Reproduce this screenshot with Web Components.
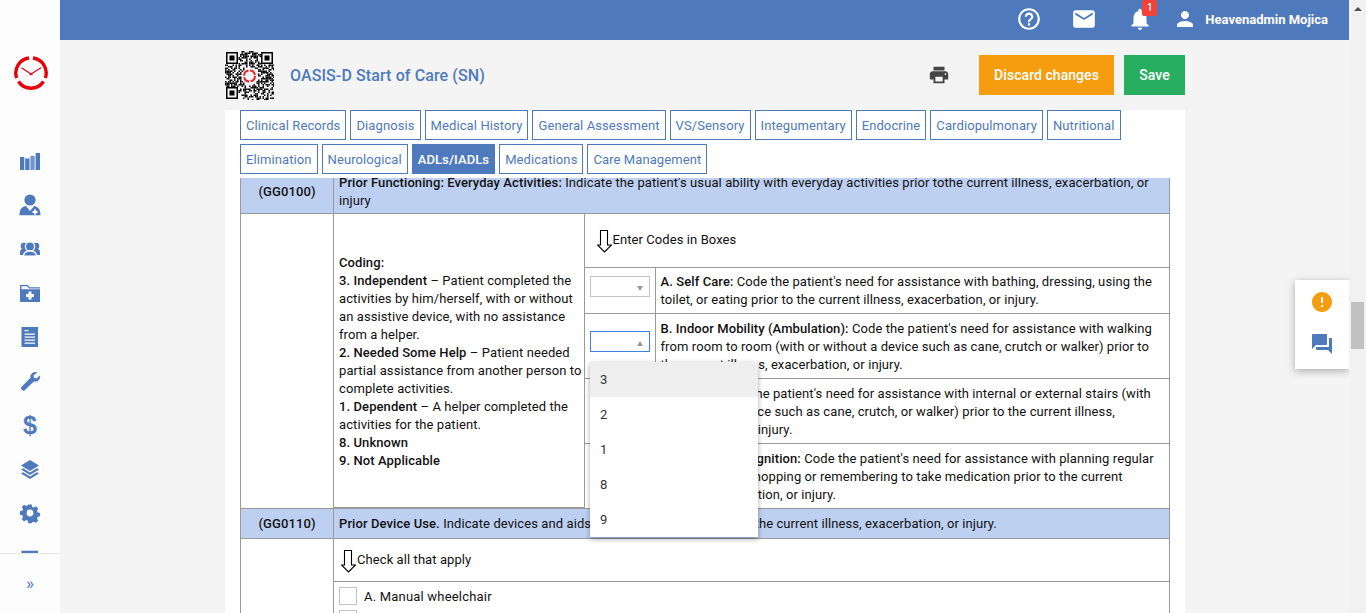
<!DOCTYPE html>
<html><head><meta charset="utf-8">
<style>
html,body{margin:0;height:100%;overflow:hidden}
body{display:flex;font-family:Roboto,"Liberation Sans",sans-serif;font-size:13px;background:#f4f4f4;color:#111}
</style></head><body>
<x-sidebar></x-sidebar>
<x-main>
  <x-topbar></x-topbar>
  <x-workspace>
    <x-titlebar></x-titlebar>
    <x-sheet>
      <x-tabs></x-tabs>
      <x-form></x-form>
    </x-sheet>
  </x-workspace>
  <x-float></x-float>
</x-main>
<x-scroll></x-scroll>
<script>
function def(name, css, html, after){
  customElements.define(name, class extends HTMLElement{
    connectedCallback(){
      if(this.shadowRoot) return;
      const r=this.attachShadow({mode:'open'});
      r.innerHTML='<style>'+css+'</style>'+html;
      if(after) after(r,this);
    }
  });
}
const B='#4e7abd';
const W='#fdfdfd';
const svgI=(inner,vb)=>`<svg viewBox="${vb||'0 0 22 22'}" width="22" height="22">${inner}</svg>`;
const sideIcons=[
 svgI(`<path d="M1 7h4.300v13H1zM6.200 8.500h4.300V20H6.200z"/><path d="M11.400 6h4.300v14h-4.300z" opacity=".8"/><path d="M16.600 3h4.400v17h-4.400z"/>`),
 svgI(`<circle cx="11" cy="6" r="5.600"/><path d="M7 12l4 5 4-5c3.500.6 6.500 2.500 6.500 9.300H.5C.5 14.500 3.500 12.600 7 12z"/><path fill="${W}" d="M15 15.500h2v1.500h1.500v2H17v1.500h-2V19h-1.500v-2H15z"/>`),
 svgI(`<circle cx="5" cy="8" r="3.300"/><circle cx="17" cy="8" r="3.300"/><path d="M1 17v-3c0-2.500 2-3.500 4-3.500h12c2 0 4 1 4 3.500v3z"/><circle cx="11" cy="8.500" r="4.600" stroke="${W}" stroke-width="1.300"/><path stroke="${W}" stroke-width="1.300" d="M4.500 18.500c0-4 3-5.500 6.500-5.500s6.500 1.500 6.500 5.500z"/><path fill="${W}" d="M0 17.600h22V22H0z"/>`),
 svgI(`<path fill-rule="evenodd" d="M1 3h7.500l2.200 2.200H21v1.300H10.200L8 4.300H2.300v3H21V20H1zM9.500 9.500V12H7v3h2.500v2.500h3V15H15v-3h-2.500V9.500z"/>`),
 svgI(`<path fill-rule="evenodd" d="M2.500 1h16.500v20H2.500zM5.500 4v1.200h4V4zM5.500 7.500v1.200h10.500V7.500zM5.500 10.500v1.200h10.500v-1.200zM5.500 13.500v1.200h10.500v-1.200zM5.500 16.500v1.200h10.500v-1.200z"/>`),
 svgI(`<path d="M21 5.500c.8 3.300-2 6.900-6.200 6.100L5.700 20.300c-1.500 1.500-4.800-1.300-3.300-3.200l9.100-9.300C10.700 4 14.500 1.100 18.300 2.200l-3.800 3.300.5 2.300 2.400.6z"/>`),
 '<div class="d">$</div>',
 svgI(`<path d="M11 2l9 5.600L11 13 2 7.600z"/><path d="M4.200 10.200L11 14.400l6.800-4.200 2.200 1.300-9 5.500-9-5.500z"/><path d="M4.200 14.200L11 18.400l6.800-4.200 2.200 1.300L11 21l-9-5.500z"/>`),
 svgI(`<path fill-rule="evenodd" d="M9 0h4l.6 2.800 2 .8 2.400-1.500 2.800 2.800-1.500 2.400.8 2 2.800.6v4l-2.800.6-.8 2 1.500 2.400-2.800 2.800-2.400-1.500-2 .8L13 22H9l-.6-2.800-2-.8L4 19.900l-2.800-2.800 1.500-2.400-.8-2L-.9 12V8l2.800-.6.8-2L1.200 3 4 .2l2.400 1.500 2-.8zM11 6a4 4 0 1 0 0 8 4 4 0 0 0 0-8z" transform="translate(0 1)"/>`,'-2 -2 26 26'),
 svgI(`<path d="M2.500 4.700H19V22H2.500z"/>`)
];
def('x-sidebar',`
:host{display:flex;flex-direction:column;width:60px;flex:none;height:100vh;background:${W};position:relative;z-index:2}
.logo{height:147px;flex:none;box-sizing:border-box;padding:55px 0 0 13px}
.nav{flex:1;min-height:0;overflow:hidden;display:flex;flex-direction:column;align-items:center;gap:22px;padding-top:3px}
.nav>*{flex:none;width:22px;height:22px}
svg{display:block;fill:${B}}
.d{font:bold 25px/22px "Liberation Sans",sans-serif;color:${B};text-align:center}
.foot{height:60px;flex:none;border-top:1px solid #e6e6e6;box-sizing:border-box;display:flex;align-items:center;justify-content:center;color:${B};font-size:17px;line-height:1}
`,`<div class="logo"><svg width="36" height="36" viewBox="0 0 36 36"><g fill="none" stroke="#e8000b" stroke-width="3.400"><path d="M16 3A15 15 0 0 0 3.700 23"/><path d="M20 3A15 15 0 0 1 32.300 23"/><path d="M5.500 26.500A15 15 0 0 0 30.500 26.500"/></g><path d="M8.500 12.700l11 7.300M28 12.700L16.500 20" stroke="#e8000b" stroke-width="1.200" fill="none"/></svg></div>
<div class="nav">${sideIcons.join('')}</div>
<div class="foot">»</div>`);
def('x-main',`:host{display:flex;flex-direction:column;flex:1;min-width:0;height:100vh;position:relative}`,`<slot></slot>`);
def('x-scroll',`:host{display:block;width:17px;flex:none;height:100vh;background:#f1f1f1;position:relative}
.up{width:0;height:0;border:4px solid transparent;border-top:0;border-bottom:4px solid #505050;margin:7px auto 0}
.th{width:13px;height:47px;background:#c1c1c1;margin:291px auto 0}`,`<div class="up"></div><div class="th"></div>`);
def('x-topbar',`:host{display:flex;align-items:center;justify-content:flex-end;height:40px;flex:none;background:${B};color:#fff;padding:0 21px 2px 0;box-sizing:border-box}
svg{display:block;fill:#fff}
.i{position:relative}
.b{position:absolute;left:15px;top:-6px;width:15px;height:16px;border-radius:2px;background:#f44336;font-size:10px;line-height:16px;text-align:center;font-weight:500}
.n{font-weight:700;font-size:13px}`,`
<div class="i" style="margin-right:29px"><svg width="26" height="26" viewBox="0 0 24 24"><path d="M11 18h2v-2h-2v2zm1-16C6.480 2 2 6.480 2 12s4.480 10 10 10 10-4.480 10-10S17.520 2 12 2zm0 18c-4.410 0-8-3.590-8-8s3.590-8 8-8 8 3.590 8 8-3.590 8-8 8zm0-14c-2.210 0-4 1.790-4 4h2c0-1.100.9-2 2-2s2 .9 2 2c0 2-3 1.750-3 5h2c0-2.250 3-2.500 3-5 0-2.210-1.790-4-4-4z"/></svg></div>
<div class="i" style="margin-right:30px"><svg width="26" height="26" viewBox="0 0 24 24"><path d="M20 4H4c-1.100 0-2 .9-2 2v12c0 1.100.9 2 2 2h16c1.100 0 2-.9 2-2V6c0-1.100-.9-2-2-2zm0 4l-8 5-8-5V6l8 5 8-5v2z"/></svg></div>
<div class="i" style="margin-right:20px"><svg width="26" height="26" viewBox="0 0 24 24"><path d="M12 22c1.100 0 2-.9 2-2h-4c0 1.100.9 2 2 2zm6-6v-5c0-3.070-1.630-5.640-4.500-6.320V4c0-.83-.67-1.500-1.500-1.500s-1.500.67-1.500 1.500v.68C7.640 5.360 6 7.920 6 11v5l-2 2v1h16v-1l-2-2z"/></svg><div class="b">1</div></div>
<div class="i" style="margin-right:8px"><svg width="24" height="24" viewBox="0 0 24 24"><path d="M12 12c2.210 0 4-1.790 4-4s-1.790-4-4-4-4 1.790-4 4 1.790 4 4 4zm0 2c-2.670 0-8 1.340-8 4v2h16v-2c0-2.660-5.330-4-8-4z"/></svg></div>
<div class="n">Heavenadmin Mojica</div>`);
def('x-workspace',`:host{display:block;width:960px;margin-left:165px;flex:1;min-height:0;overflow:hidden}`,`<slot></slot>`);
def('x-titlebar',`:host{display:flex;align-items:center;height:70px;box-sizing:border-box}
.q{width:49px;height:49px;flex:none;margin-right:16px}
h1{margin:0;font:500 16px Roboto,sans-serif;color:${B};flex:1;letter-spacing:.1px}
svg.p{fill:#444;margin-right:29px;display:block}
button{border:0;height:40px;font:500 14px Roboto,sans-serif;color:#fff;padding:0;border-radius:0;letter-spacing:.05px}
.o{width:135px;background:#f59d0e;margin-right:10px}.g{width:61px;background:#27ae60}`,`
<svg class="q" viewBox="0 0 49 49"></svg><h1>OASIS-D Start of Care (SN)</h1>
<svg class="p" width="22" height="22" viewBox="0 0 24 24"><path d="M19 8H5c-1.660 0-3 1.340-3 3v6h4v4h12v-4h4v-6c0-1.660-1.340-3-3-3zm-3 11H8v-5h8v5zm3-7c-.55 0-1-.45-1-1s.45-1 1-1 1 .45 1 1-.45 1-1 1zm-1-9H6v4h12V3z"/></svg>
<button class="o">Discard changes</button><button class="g">Save</button>`,r=>{
  const q=r.querySelector('.q');let s='';let seed=11;
  const rnd=()=>(seed=(seed*16807)%2147483647)%100;
  const m=1.5;const n=32;
  const inF=(x,y)=>(x<9&&y<9)||(x>=n-8&&y<9)||(x<9&&y>=n-8);
  for(let y=0;y<=n;y++)for(let x=0;x<=n;x++){
    const dc=Math.hypot(x-16,y-16.5);
    if(inF(x,y)||dc<6)continue;
    if(rnd()<52)s+=`<rect x="${x*m}" y="${y*m}" width="${m}" height="${m}"/>`;
  }
  [[1,1],[36,1],[1,36]].forEach(([a,b])=>{s+=`<path fill-rule="evenodd" d="M${a} ${b}h12v12h-12zM${a+1.500} ${b+1.500}v9h9v-9z"/><rect x="${a+3.500}" y="${b+3.500}" width="5" height="5"/>`});
  s+=`<circle cx="24.500" cy="25" r="5.500" fill="none" stroke="#e8232a" stroke-width="2" stroke-dasharray="7 1.600"/>`;
  q.innerHTML=s;
});
def('x-sheet',`:host{display:block;background:#fff;padding:0 15px;height:503px;overflow:hidden;position:relative}`,`<slot></slot>`);
const tabs=[['Clinical Records','Diagnosis','Medical History','General Assessment','VS/Sensory','Integumentary','Endocrine','Cardiopulmonary','Nutritional'],['Elimination','Neurological','ADLs/IADLs','Medications','Care Management']];
def('x-tabs',`:host{display:flex;flex-direction:column;gap:4px;height:68px;box-sizing:border-box;position:relative;z-index:1;background:#fff}
.r{display:flex;gap:4px;letter-spacing:.1px}
.r+.r{letter-spacing:.09px}
a{display:block;height:30px;box-sizing:border-box;border:1px solid ${B};color:${B};padding:0 5px;line-height:29px;font-size:13px;white-space:nowrap}
a.on{background:${B};color:#fff;font-weight:500}`,
tabs.map(r=>`<div class="r">${r.map(t=>`<a class="${t=='ADLs/IADLs'?'on':''}">${t}</a>`).join('')}</div>`).join(''));
const arrow=(ml)=>`<svg width="15" height="23" viewBox="0 0 15 23" style="flex:none;margin-left:${ml}px;margin-right:1px;margin-top:2px"><path d="M3.500 .5h7v14.500h4L7.500 22 .5 15h3z" fill="#fff" stroke="#000" stroke-width="1.100"/></svg>`;
const sel=(cls)=>`<div class="sel ${cls||''}"><i></i></div>`;
def('x-form',`:host{display:block;margin-top:-9px;font-size:13px;line-height:18px;letter-spacing:.09px;position:relative}
table{border-collapse:collapse;width:930px;table-layout:fixed}
td{border:1px solid #999;padding:0 5px;vertical-align:middle}
b{font-weight:500}
tr.h td{background:#bdd0f2}
tr.h td:first-child{text-align:center;font-weight:500}
.hint{display:flex;align-items:center;letter-spacing:.08px}
.hint span{margin-bottom:2px}
.inner{width:100%;height:100%;border-collapse:collapse;table-layout:fixed}
.nest{padding:0;height:293px}
.inner tr:first-child td{border-top:0}.inner tr:last-child td{border-bottom:0}
.inner td:first-child{border-left:0}.inner td:last-child{border-right:0}
.inner td.cod{padding:3px 0 0 5px}
td.t{padding-top:2px}
td.t4{padding-top:4px}
.sel{width:60px;height:21px;border:1px solid #c4c4c4;box-sizing:border-box;position:relative;background:#fff;margin-bottom:8px}
.sel i{position:absolute;right:6px;top:9px;border:3.500px solid transparent;border-top:5px solid #999;border-bottom:0}
.sel.open{border-color:#3f7fe0}
.sel.open i{border-top:0;border-bottom:5px solid #999}
.ck{display:flex;align-items:center;gap:7px;height:18px;margin-bottom:5px;letter-spacing:.2px}
.ck span{margin-top:2px}
.ck i{width:18px;height:18px;border:1px solid #c4c4c4;box-sizing:border-box;display:block;flex:none}
.pop{position:absolute;left:350px;top:193px;width:168px;background:#fff;box-shadow:0 2px 5px rgba(0,0,0,.35);z-index:3;color:#333}
.pop div{height:35px;line-height:35px;padding-left:10px}
.pop div:first-child{background:#eee}
`,`<table><colgroup><col style="width:93px"><col></colgroup>
<tr class="h" style="height:44px"><td>(GG0100)</td><td><b>Prior Functioning: Everyday Activities:</b> Indicate the patient's usual ability with everyday activities prior tothe current illness, exacerbation, or injury</td></tr>
<tr><td></td><td class="nest" style="padding:0"><table class="inner" style="width:836px"><colgroup><col style="width:250px"><col style="width:71px"><col></colgroup>
<tr style="height:53px"><td rowspan="5" class="cod"><b>Coding:</b><br><b>3. Independent</b> – Patient completed the activities by him/herself, with or without an assistive device, with no assistance from a helper.<br><b>2. Needed Some Help</b> – Patient needed partial assistance from another person to complete activities.<br><b>1. Dependent</b> – A helper completed the activities for the patient.<br><b>8. Unknown</b><br><b>9. Not Applicable</b></td><td colspan="2" style="padding-top:1px"><div class="hint">${arrow(7)}<span>Enter Codes in Boxes</span></div></td></tr>
<tr style="height:46px"><td>${sel()}</td><td class="t"><b>A. Self Care:</b> Code the patient's need for assistance with bathing, dressing, using the toilet, or eating prior to the current illness, exacerbation, or injury.</td></tr>
<tr style="height:65px"><td>${sel('open')}</td><td class="t"><b>B. Indoor Mobility (Ambulation):</b> Code the patient's need for assistance with walking from room to room (with or without a device such as cane, crutch or walker) prior to the current illness, exacerbation, or injury.</td></tr>
<tr style="height:65px"><td>${sel()}</td><td class="t"><b>C. Stairs:</b> Code the patient's need for assistance with internal or external stairs (with or without a device such as cane, crutch, or walker) prior to the current illness, exacerbation, or injury.</td></tr>
<tr style="height:64px"><td>${sel()}</td><td class="t4"><b>D. Functional Cognition:</b> Code the patient's need for assistance with planning regular tasks, such as shopping or remembering to take medication prior to the current illness, exacerbation, or injury.</td></tr>
</table></td></tr>
<tr class="h" style="height:30px"><td class="t">(GG0110)</td><td class="t"><b>Prior Device Use.</b> Indicate devices and aids used by the patient prior to the current illness, exacerbation, or injury.</td></tr>
<tr><td rowspan="2"></td><td class="t" style="height:40px"><div class="hint">${arrow(2)}<span>Check all that apply</span></div></td></tr>
<tr><td style="padding-top:5px"><div class="ck"><i></i><span>A. Manual wheelchair</span></div><div class="ck"><i></i><span>B. Motorized wheelchair and/or scooter</span></div></td></tr>
</table>
<div class="pop"><div>3</div><div>2</div><div>1</div><div>8</div><div>9</div></div>`);
def('x-float',`:host{position:absolute;left:1235px;top:280px;width:54px;height:89px;background:#fff;box-shadow:0 2px 8px rgba(0,0,0,.3);display:flex;flex-direction:column;align-items:center;justify-content:center;gap:18px;padding-bottom:3px;box-sizing:border-box}
svg{display:block}`,`<svg width="24" height="24" viewBox="0 0 24 24" fill="#f59d0e"><path d="M12 2C6.480 2 2 6.480 2 12s4.480 10 10 10 10-4.480 10-10S17.520 2 12 2zm1 15h-2v-2h2v2zm0-4h-2V7h2v6z"/></svg>
<svg width="24" height="24" viewBox="0 0 24 24" fill="${B}"><path d="M21 6h-2v9H6v2c0 .55.45 1 1 1h11l4 4V7c0-.55-.45-1-1-1zm-4 6V3c0-.55-.45-1-1-1H3c-.55 0-1 .45-1 1v14l4-4h10c.55 0 1-.45 1-1z"/></svg>`);
</script>
</body></html>
